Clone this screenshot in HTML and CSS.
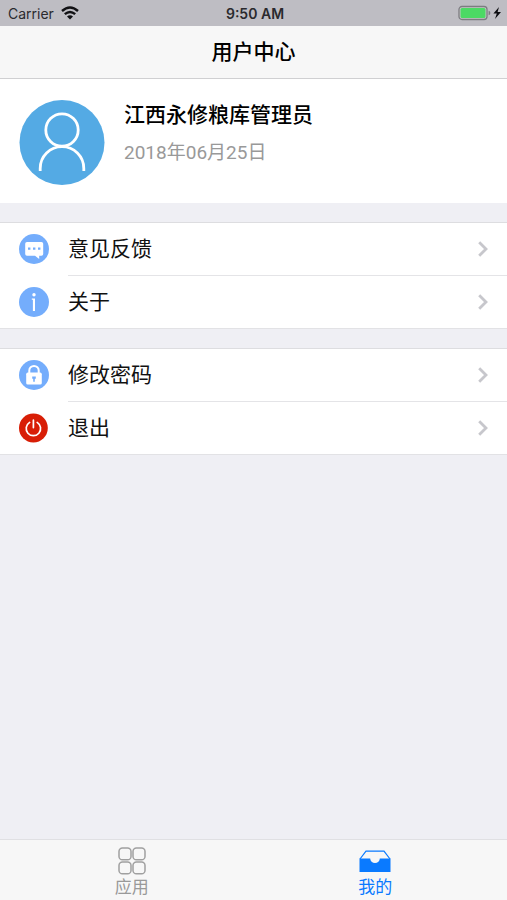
FILE: index.html
```html
<!DOCTYPE html>
<html lang="zh-CN">
<head>
<meta charset="utf-8">
<meta name="viewport" content="width=device-width, initial-scale=1">
<title>用户中心</title>
<link rel="stylesheet" href="styles.css">
</head>
<body>
<div class="status">
  <div class="status-left">
    <span>Carrier</span>
    <svg width="18" height="14" viewBox="0 0 18 14" fill="none" stroke="#111114" stroke-width="2.4" aria-hidden="true">
      <path d="M1 5Q9-2 17 5M3.8 8.2Q9 3.6 14.2 8.2"/>
      <path d="M6 10.6Q9 8 12 10.6L9 13.4Z" fill="#111114" stroke="none"/>
    </svg>
  </div>
  <span class="status-time">9:50 AM</span>
  <div class="status-right">
    <svg width="44" height="16" viewBox="0 0 44 16" aria-hidden="true">
      <rect x="1" y="1.5" width="28" height="13" rx="3" fill="#c9c9c9" stroke="#7c7c80" stroke-width="1.3"/>
      <rect x="2.5" y="3" width="25" height="10" rx="1.5" fill="#4cd964"/>
      <path d="M30.6 5.8Q32.4 6 32.4 8T30.6 10.2Z" fill="#7c7c80"/>
      <path d="M41 2L35.4 8.6H38.8L37 14L43 7H39.6Z" fill="#0c0c10"/>
    </svg>
  </div>
</div>
<header class="nav"><h1>用户中心</h1></header>
<main class="content">
  <section class="profile">
    <svg class="avatar" viewBox="0 0 86 86" aria-hidden="true">
      <circle cx="43" cy="43.5" r="42.5" fill="#54aae4"/>
      <g fill="none" stroke="#fff" stroke-width="2.8">
        <circle cx="43" cy="31" r="16.2"/>
        <path d="M21.2 72V69.5A21.8 21.8 0 0 1 64.8 69.5V72"/>
      </g>
    </svg>
    <div class="who">
      <h2>江西永修粮库管理员</h2>
      <time datetime="2018-06-25">2018年06月25日</time>
    </div>
  </section>
  <nav class="group">
    <a class="row" href="#feedback">
      <svg class="icon" viewBox="0 0 30 30" aria-hidden="true">
        <circle cx="15" cy="15" r="15" fill="#74adfc"/>
        <path d="M8 8H22.4Q24.2 8 24.2 9.8V20Q24.2 21.8 22.4 21.8H20.2V25L16 21.8H8Q6.2 21.8 6.2 20V9.8Q6.2 8 8 8Z" fill="#fff"/>
        <path d="M9 13.4h2.4v2.4h-2.4zM14 13.4h2.4v2.4H14zM19 13.4h2.4v2.4h-2.4z" fill="#74adfc"/>
      </svg>
      <span class="label">意见反馈</span>
      <svg class="chevron" viewBox="0 0 10 16" aria-hidden="true"><path d="M1.2 1.2L8 8L1.2 14.8"/></svg>
    </a>
    <a class="row" href="#about">
      <svg class="icon" viewBox="0 0 30 30" aria-hidden="true">
        <circle cx="15" cy="15" r="15" fill="#74adfc"/>
        <circle cx="15" cy="7.8" r="1.7" fill="#fff"/>
        <path d="M12.8 11.4H16V24H13.9V12.8H12.8Z" fill="#fff"/>
      </svg>
      <span class="label">关于</span>
      <svg class="chevron" viewBox="0 0 10 16" aria-hidden="true"><path d="M1.2 1.2L8 8L1.2 14.8"/></svg>
    </a>
  </nav>
  <nav class="group">
    <a class="row" href="#password">
      <svg class="icon" viewBox="0 0 30 30" aria-hidden="true">
        <circle cx="15" cy="15" r="15" fill="#74adfc"/>
        <path d="M10.3 14V10.6A4.7 4.7 0 0 1 19.7 10.6V14" fill="none" stroke="#fff" stroke-width="2"/>
        <rect x="7.2" y="12.6" width="15.6" height="12" rx="1.6" fill="#fff"/>
        <path d="M13.2 16.6H16.8V18.8H15.8V21.8H14.2V18.8H13.2Z" fill="#74adfc"/>
      </svg>
      <span class="label">修改密码</span>
      <svg class="chevron" viewBox="0 0 10 16" aria-hidden="true"><path d="M1.2 1.2L8 8L1.2 14.8"/></svg>
    </a>
    <a class="row" href="#logout">
      <svg class="icon" viewBox="0 0 30 30" aria-hidden="true">
        <circle cx="14.4" cy="15" r="14.4" fill="#d81e06"/>
        <g fill="none" stroke="#fff" stroke-width="1.7" stroke-linecap="round">
          <path d="M10.6 9.4A7.2 7.2 0 1 0 18.2 9.4M14.4 7.2V14.6"/>
        </g>
      </svg>
      <span class="label">退出</span>
      <svg class="chevron" viewBox="0 0 10 16" aria-hidden="true"><path d="M1.2 1.2L8 8L1.2 14.8"/></svg>
    </a>
  </nav>
</main>
<nav class="tabs">
  <a class="tab" href="#apps">
    <svg width="28" height="28" viewBox="0 0 28 28" fill="none" stroke="#a0a0a0" stroke-width="1.5" aria-hidden="true">
      <rect x="1" y="1" width="12" height="11.8" rx="3.4"/>
      <rect x="15" y="1" width="12" height="11.8" rx="3.4"/>
      <rect x="1" y="15" width="12" height="11.8" rx="3.4"/>
      <rect x="15" y="15" width="12" height="11.8" rx="3.4"/>
    </svg>
    <span>应用</span>
  </a>
  <a class="tab active" href="#mine" aria-current="page">
    <svg width="32" height="28" viewBox="0 0 32 28" aria-hidden="true">
      <path d="M1 12L7 4.2H25L31 12" fill="none" stroke="#0a7aff" stroke-width="1.2"/>
      <path d="M.5 11.5H11.2A4.8 4.6 0 0 0 20.8 11.5H31.5V25H.5Z" fill="#0a7aff"/>
    </svg>
    <span>我的</span>
  </a>
</nav>
</body>
</html>
```
FILE: styles.css
```css
* {
  box-sizing: border-box;
}

body {
  margin: 0;
  min-height: 100vh;
  display: flex;
  flex-direction: column;
  background: #efeff4;
  color: #000;
  font-family: Roboto, "Noto Sans CJK SC", sans-serif;
}

svg {
  display: block;
  flex: none;
}

a {
  color: inherit;
  text-decoration: none;
}

h1,
h2 {
  margin: 0;
  font-size: 21px;
  line-height: 32px;
  font-weight: 500;
}

.status {
  display: grid;
  grid-template-columns: 1fr auto 1fr;
  align-items: center;
  height: 26px;
  padding: 0 5px 0 8px;
  background: #bebdc3;
  color: #2a2a2e;
  font-family: Inter, sans-serif;
  font-size: 14px;
}

.status-left {
  display: flex;
  align-items: center;
  gap: 7px;
}

.status-time {
  font-weight: 600;
}

.status-right {
  justify-self: end;
}

.nav {
  display: flex;
  align-items: center;
  justify-content: center;
  height: 53px;
  background: #f7f7f7;
  border-bottom: 1px solid #d0d0d2;
}

.content {
  flex: 1;
}

.profile {
  display: flex;
  gap: 19px;
  padding: 20px 19px 18px;
  background: #fff;
}

.avatar {
  width: 86px;
  height: 86px;
}

.who {
  display: flex;
  flex-direction: column;
  gap: 8px;
}

.who time {
  font-size: 19px;
  line-height: 28px;
  color: #999;
}

.group {
  margin-top: 19px;
  background: #fff;
  border-top: 1px solid #dddde0;
  border-bottom: 1px solid #e2e2e5;
}

.row {
  display: flex;
  align-items: center;
  padding-left: 19px;
}

.icon {
  width: 30px;
  height: 30px;
  margin-right: 19px;
}

.label {
  flex: 1;
  font-size: 21px;
  line-height: 52px;
  color: #111;
}

.row + .row .label,
.row + .row .chevron {
  border-top: 1px solid #e4e4e7;
}

.chevron {
  width: 29px;
  height: 53px;
  padding-right: 19px;
  fill: none;
  stroke: #c7c7cc;
  stroke-width: 2.8;
}

.row:first-child .chevron {
  height: 52px;
}

.tabs {
  display: grid;
  grid-template-columns: 1fr 1fr;
  padding: 7px 10px 0;
  height: 61px;
  background: #f7f7f7;
  border-top: 1px solid #e0e0e3;
}

.tab {
  display: flex;
  flex-direction: column;
  align-items: center;
  font-size: 17px;
  line-height: 24px;
  color: #999;
}

.tab.active {
  color: #0a7aff;
}
```
